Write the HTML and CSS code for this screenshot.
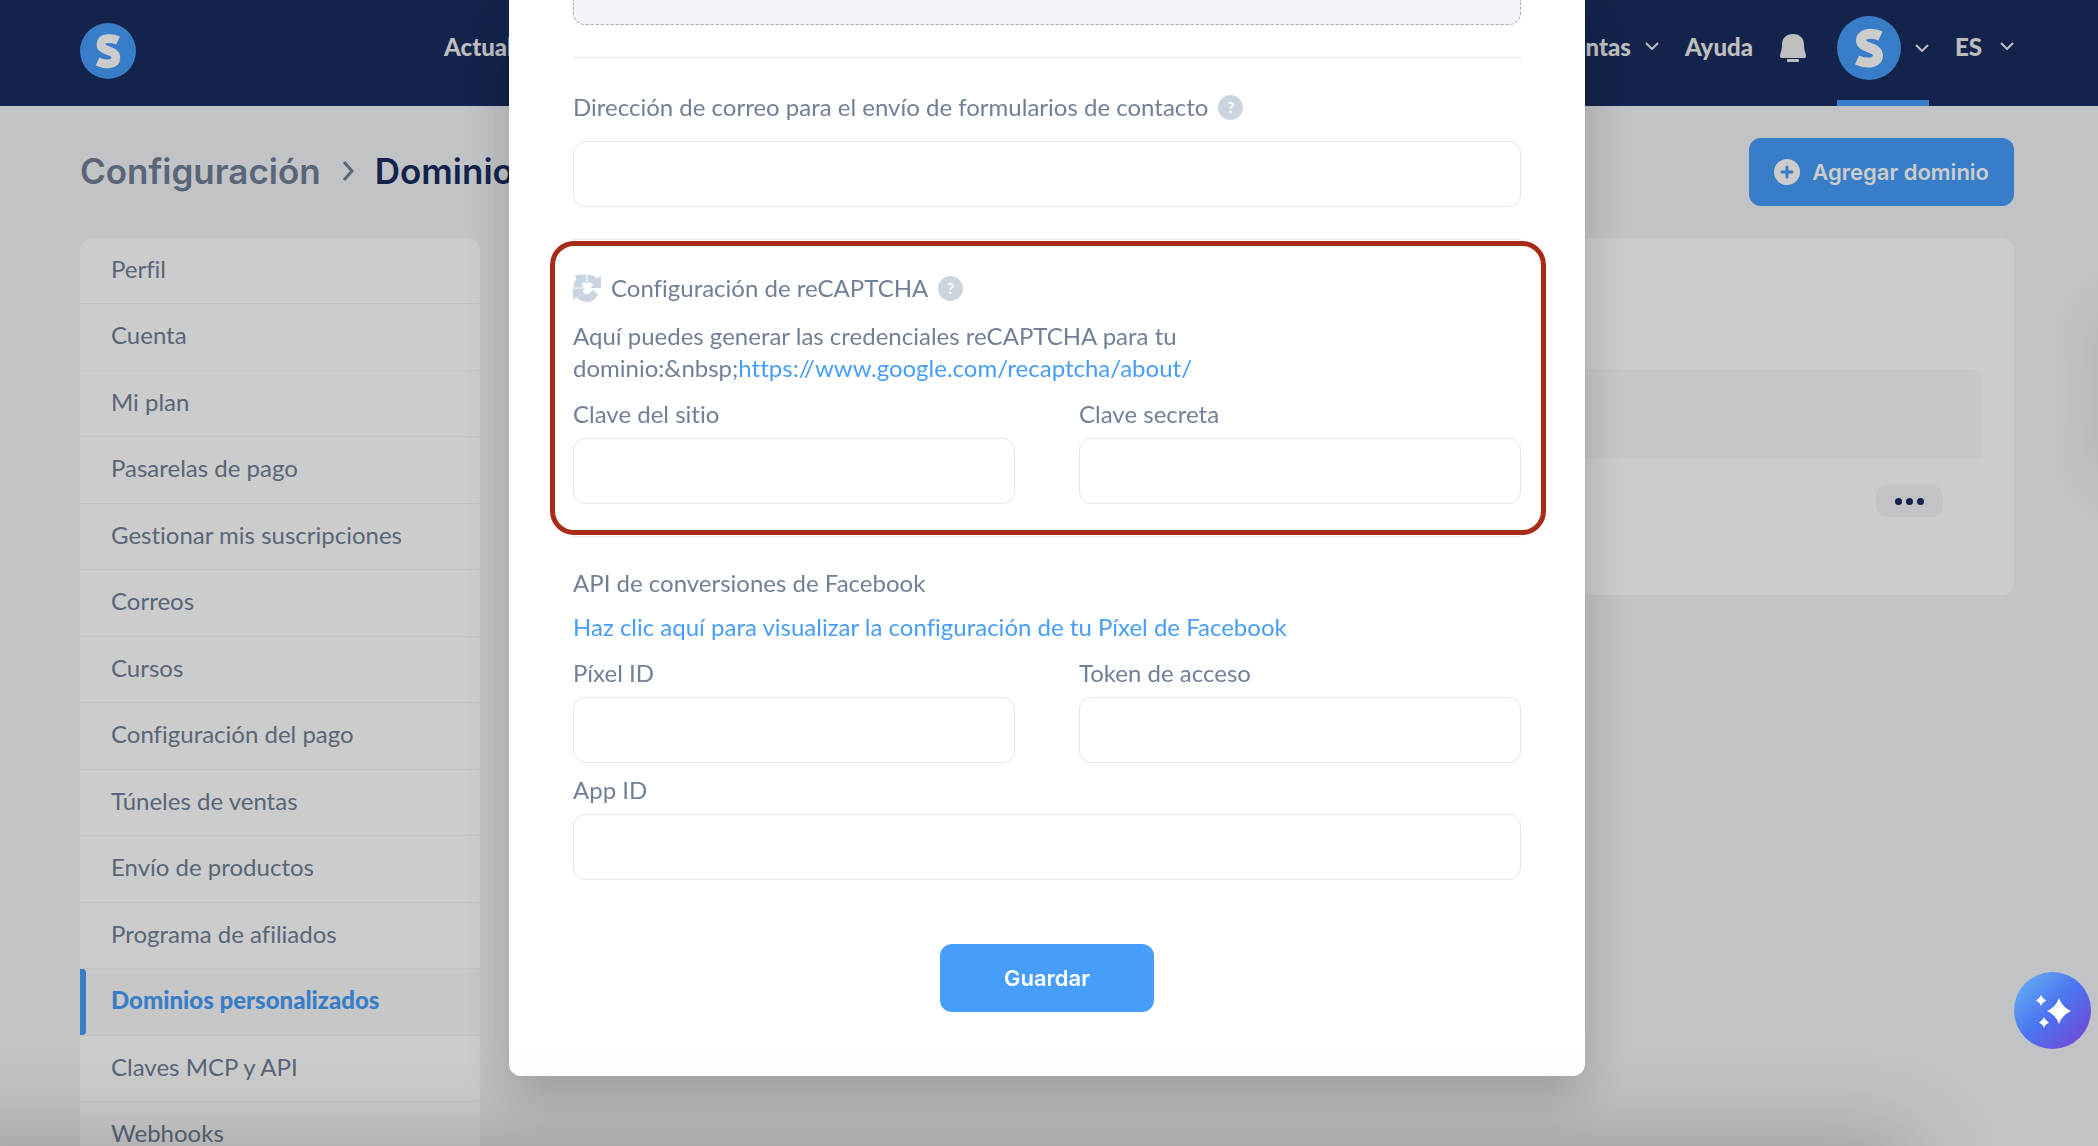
FILE: index.html
```
<!DOCTYPE html>
<html lang="es">
  <head>
    <meta charset="utf-8">
    <title>Dominios personalizados</title>
    <link rel="stylesheet" href="styles.css">
  </head>
  <body>
    <header class="header">
      <a class="logo" href="#" aria-label="Inicio">
        <svg viewBox="0 0 64 64"><circle cx="32" cy="32" r="32" fill="#469dfa"/><path d="M43.500 20C37 17 24 16 24 24.500C24 33 41 30 41 39.500C41 48 29 48 20 44" fill="none" stroke="#fff" stroke-width="10"/></svg>
      </a>
      <nav class="nav">
        <a class="nav-link" href="#">Actualizar</a>
        <a class="nav-link nav-push" href="#">Ventas <svg class="chevron" viewBox="0 0 14 8"><path d="M1 1l6 6 6-6"/></svg></a>
        <a class="nav-link" href="#">Ayuda</a>
        <button class="bell" aria-label="Notificaciones">
          <svg viewBox="0 0 26 28"><path d="M13 0C6 0 2 4 2 11c0 6-2 8-2 11 0 2 1 2 3 2h20c2 0 3 0 3-2 0-3-2-5-2-11 0-7-4-11-11-11z"/><rect x="7" y="25" width="12" height="3" rx="1"/></svg>
        </button>
        <a class="nav-link profile" href="#" aria-label="Perfil">
          <svg class="avatar" viewBox="0 0 64 64"><circle cx="32" cy="32" r="32" fill="#469dfa"/><path d="M43.500 20C37 17 24 16 24 24.500C24 33 41 30 41 39.500C41 48 29 48 20 44" fill="none" stroke="#fff" stroke-width="10"/></svg>
          <svg class="chevron" viewBox="0 0 14 8"><path d="M1 1l6 6 6-6"/></svg>
        </a>
        <a class="nav-link language" href="#">ES <svg class="chevron" viewBox="0 0 14 8"><path d="M1 1l6 6 6-6"/></svg></a>
      </nav>
    </header>

    <main class="page">
      <div class="page-head">
        <h1 class="breadcrumb">
          <a href="#">Configuración</a>
          <svg viewBox="0 0 12 22"><path d="M2 2l8 9-8 9"/></svg>
          <span>Dominios</span>
        </h1>
        <button class="btn btn-add">
          <svg viewBox="0 0 26 26"><circle cx="13" cy="13" r="13" fill="#fff"/><path d="M13 8v10M8 13h10" stroke="#469dfa" stroke-width="3" stroke-linecap="round"/></svg>
          Agregar dominio
        </button>
      </div>
      <div class="columns">
        <nav class="sidebar">
          <a href="#">Perfil</a>
          <a href="#">Cuenta</a>
          <a href="#">Mi plan</a>
          <a href="#">Pasarelas de pago</a>
          <a href="#">Gestionar mis suscripciones</a>
          <a href="#">Correos</a>
          <a href="#">Cursos</a>
          <a href="#">Configuración del pago</a>
          <a href="#">Túneles de ventas</a>
          <a href="#">Envío de productos</a>
          <a href="#">Programa de afiliados</a>
          <a class="active" href="#">Dominios personalizados</a>
          <a href="#">Claves MCP y API</a>
          <a href="#">Webhooks</a>
        </nav>
        <section class="card">
          <div class="table-head"></div>
          <div class="table-row">
            <button class="more" aria-label="Opciones"><i></i><i></i><i></i></button>
          </div>
        </section>
      </div>
    </main>

    <div class="overlay">
      <form class="modal">
        <div class="dropzone"></div>
        <div class="section section-mail">
          <label class="label" for="email">Dirección de correo para el envío de formularios de contacto <span class="help">?</span></label>
          <input class="input" type="email" id="email">
        </div>
        <div class="section section-captcha">
          <div class="highlight"></div>
          <h2 class="label captcha-title">
            <svg class="captcha-icon" viewBox="0 0 28 28"><path d="M14.500 0.500c4 0 7 1.500 9 4L28 2v12H17l3-3-3-3-2.500 2zM13.500 0.500v9l-3-1.500-2 3 2 2.500H0.500c0-4 1-6 3-8.500L2 1zM0 14.500h12l-2.500 2.500c2 4 6 4.500 8.500 0.500l2.500-1.500 4.500 5C20 30 9 30 3.500 23L0 26z"/></svg>
            Configuración de reCAPTCHA <span class="help">?</span>
          </h2>
          <p class="text">Aquí puedes generar las credenciales reCAPTCHA para tu<br>dominio:&amp;nbsp;<a href="#">https://www.google.com/recaptcha/about/</a></p>
          <div class="fields">
            <div class="field">
              <label class="label" for="site-key">Clave del sitio</label>
              <input class="input" type="text" id="site-key">
            </div>
            <div class="field">
              <label class="label" for="secret-key">Clave secreta</label>
              <input class="input" type="text" id="secret-key">
            </div>
          </div>
        </div>
        <div class="section section-facebook">
          <h2 class="label">API de conversiones de Facebook</h2>
          <p class="text"><a href="#">Haz clic aquí para visualizar la configuración de tu Píxel de Facebook</a></p>
          <div class="fields">
            <div class="field">
              <label class="label" for="pixel-id">Píxel ID</label>
              <input class="input" type="text" id="pixel-id">
            </div>
            <div class="field">
              <label class="label" for="token">Token de acceso</label>
              <input class="input" type="text" id="token">
            </div>
            <div class="field field-wide">
              <label class="label" for="app-id">App ID</label>
              <input class="input" type="text" id="app-id">
            </div>
          </div>
        </div>
        <button class="btn btn-save" type="button">Guardar</button>
      </form>
    </div>

    <div class="shade shade-bottom"></div>
    <div class="shade shade-side"></div>
    <button class="assistant" aria-label="Asistente">
      <svg viewBox="0 0 36 34"><path d="M24 4q3 9 12 13-9 4-12 13-3-9-12-13 9-4 12-13zM6 1q1.500 4 5 5.500-3.500 1.500-5 5.500-1.500-4-5-5.500 3.500-1.500 5-5.500zM9 23q1.500 4 5 5.500-3.500 1.500-5 5.500-1.500-4-5-5.500 3.500-1.500 5-5.500z"/></svg>
    </button>
  </body>
</html>
```
FILE: styles.css
```
* {
  box-sizing: border-box;
}
html,
body {
  height: 100%;
}
body {
  margin: 0;
  overflow: hidden;
  background: #f3f4f9;
  color: #718096;
  font-family: Lato, sans-serif;
  font-size: 24px;
  font-variant-ligatures: none;
}
a {
  color: #469dfa;
  text-decoration: none;
}
button {
  border: 0;
  padding: 0;
  font: inherit;
}
svg {
  display: block;
}

/* header */
.header {
  display: flex;
  height: 106px;
  padding: 0 84px 0 80px;
  background: #192c5e;
}
.logo {
  width: 56px;
  padding-top: 23px;
}
.nav {
  display: flex;
  flex: 1;
  margin-left: 308px;
}
.nav-link {
  display: flex;
  gap: 14px;
  height: 92px;
  align-items: center;
  color: #eee;
  font-weight: 900;
}
.nav-push {
  margin: 0 26px 0 auto;
}
.chevron {
  width: 14px;
  height: 8px;
  fill: none;
  stroke: #eee;
  stroke-width: 2;
}
.bell {
  width: 26px;
  margin: 0 31px 10px 27px;
  background: none;
  fill: #eee;
}
.profile {
  height: 106px;
  padding-bottom: 4px;
  border-bottom: 6px solid #469dfa;
}
.avatar {
  width: 64px;
  height: 64px;
}
.language {
  gap: 18px;
  margin-left: 26px;
}

/* page */
.page {
  padding: 32px 84px 0 80px;
}
.page-head {
  display: flex;
  justify-content: space-between;
  align-items: center;
  margin-bottom: 32px;
}
.breadcrumb {
  display: flex;
  align-items: center;
  gap: 21px;
  margin: 0;
  padding-bottom: 2px;
  color: #192c5e;
  font-family: Inter, sans-serif;
  font-size: 35px;
  font-weight: 600;
}
.breadcrumb a {
  color: #718096;
}
.breadcrumb svg {
  width: 12px;
  fill: none;
  stroke: #718096;
  stroke-width: 3;
}
.btn {
  display: flex;
  align-items: center;
  justify-content: center;
  gap: 12px;
  height: 68px;
  border-radius: 12px;
  background: #469dfa;
  color: #fff;
  font-family: Inter, sans-serif;
  font-size: 22px;
  font-weight: 600;
}
.btn-add {
  padding: 0 25px;
}
.btn-add svg {
  width: 26px;
}
.columns {
  display: flex;
  align-items: flex-start;
  gap: 32px;
}
.sidebar {
  width: 400px;
  border-radius: 12px;
  background: #fff;
  overflow: hidden;
}
.sidebar a {
  display: flex;
  align-items: center;
  height: 67px;
  padding: 0 31px 5px;
  border-bottom: 1px solid #f3f3f3;
  color: #718096;
}
.sidebar a:nth-child(odd) {
  height: 66px;
}
.sidebar .active {
  position: relative;
  background: #f9f9f9;
  color: #469dfa;
  font-weight: 900;
}
.active::before {
  content: "";
  position: absolute;
  left: 0;
  top: 0;
  bottom: 0;
  width: 6px;
  border-radius: 0 4px 4px 0;
  background: #469dfa;
}
.card {
  flex: 1;
  height: 357px;
  padding: 131px 32px 0;
  border-radius: 12px;
  background: #fff;
}
.table-head {
  height: 90px;
  border-radius: 12px 12px 0 0;
  background: #f9f9f9;
}
.table-row {
  display: flex;
  justify-content: flex-end;
  padding: 26px 39px;
}
.more {
  display: flex;
  align-items: center;
  justify-content: center;
  gap: 4px;
  width: 67px;
  height: 32px;
  border-radius: 12px;
  background: #f3f4f9;
}
.more i {
  width: 7px;
  height: 7px;
  border-radius: 50%;
  background: #192c5e;
}

/* modal */
.overlay {
  position: fixed;
  inset: 0;
  display: flex;
  justify-content: center;
  align-items: flex-start;
  background: rgba(0, 0, 0, 0.2);
}
.modal {
  width: 1076px;
  margin-right: 4px;
  padding: 0 64px 64px;
  border-radius: 0 0 12px 12px;
  background: #fff;
  box-shadow: 0 20px 50px rgba(0, 0, 0, 0.2);
}
.dropzone {
  height: 25px;
  margin-bottom: 32px;
  border: 1px dashed #a0aec0;
  border-top: 0;
  border-radius: 0 0 12px 12px;
  background: #f3f4f9;
}
.section {
  border-top: 1px solid #e2e5e9;
}
.label,
.text {
  display: flex;
  align-items: center;
  margin: 0;
  font-size: 24px;
  font-weight: 400;
  line-height: 32px;
}
.text {
  display: block;
}
.help {
  display: flex;
  align-items: center;
  justify-content: center;
  width: 25px;
  height: 25px;
  margin-left: 10px;
  border-radius: 50%;
  background: #cbd5e0;
  color: #fff;
  font-size: 15px;
  font-weight: 900;
}
.input {
  display: block;
  width: 100%;
  height: 66px;
  padding: 0 20px;
  border: 1px solid #e2e5e9;
  border-radius: 12px;
  background: #fff;
  font: inherit;
}
.section-mail {
  padding: 33px 0 32px;
}
.section-mail .label {
  margin-bottom: 18px;
}
.section-captcha {
  position: relative;
  padding: 32px 0;
}
/* red frame round the captcha settings */
.highlight {
  position: absolute;
  inset: 1px -25px 1px -23px;
  border: 5px solid #a82a18;
  border-radius: 24px;
  pointer-events: none;
}
.captcha-title {
  margin-bottom: 16px;
}
.captcha-icon {
  width: 28px;
  height: 28px;
  margin-right: 10px;
  fill: #cbd5e0;
}
.fields {
  display: grid;
  grid-template-columns: 1fr 1fr;
  gap: 11px 64px;
  margin-top: 14px;
}
.field .label {
  margin-bottom: 8px;
}
.field-wide {
  grid-column: 1 / 3;
}
.section-facebook {
  padding: 30px 0 64px;
}
.section-facebook .text {
  margin-top: 12px;
}
.btn-save {
  width: 214px;
  margin: 0 auto;
}

/* soft shadows coming in from panels outside the window */
.shade {
  position: fixed;
}
.shade-bottom {
  left: -100px;
  right: 190px;
  bottom: -100px;
  height: 100px;
  box-shadow: 0 0 90px rgba(0, 0, 0, 0.25);
}
.shade-side {
  right: -40px;
  top: 300px;
  width: 40px;
  height: 190px;
  box-shadow: 0 0 60px rgba(0, 0, 0, 0.1);
}
.assistant {
  position: fixed;
  right: 7px;
  bottom: 97px;
  display: flex;
  align-items: center;
  justify-content: center;
  width: 77px;
  height: 77px;
  border-radius: 50%;
  background: linear-gradient(135deg, #61a9f2 10%, #4b74f0 50%, #7a3fd0 100%);
  fill: #fff;
}
.assistant svg {
  width: 36px;
}
```
